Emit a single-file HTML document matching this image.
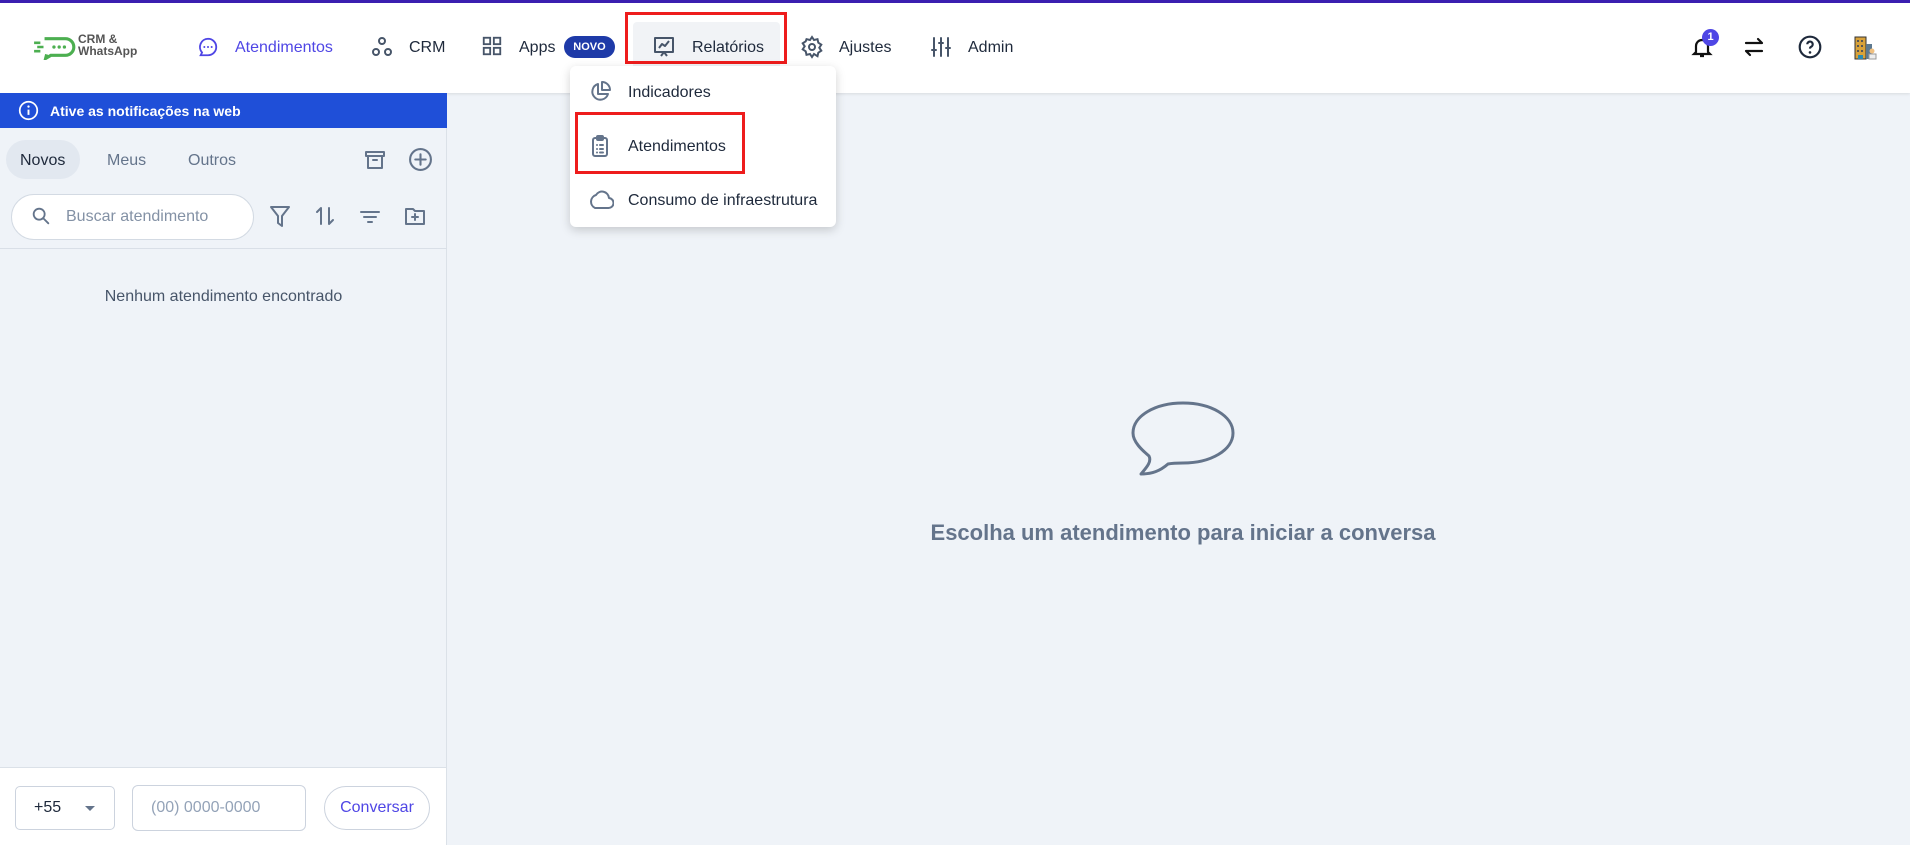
<!DOCTYPE html>
<html><head><meta charset="utf-8"><style>
*{box-sizing:border-box;margin:0;padding:0}
body{width:1910px;height:845px;overflow:hidden;font-family:"Liberation Sans",sans-serif;background:#eff3f8;position:relative;color:#1e293b}
.abs{position:absolute}
.top{left:0;top:0;width:1910px;height:3px;background:#3b1fb0}
.hdr{left:0;top:3px;width:1910px;height:90px;background:#fff;box-shadow:0 1px 3px rgba(0,0,0,.1)}
.nav{font-size:16px;color:#1e293b;top:39px}
svg{display:block}
.left{left:0;top:93px;width:447px;height:752px;background:#eff3f8;border-right:1px solid #dbe1e8}
.banner{left:0;top:93px;width:447px;height:35px;background:#1f4fd8;color:#fff;font-weight:bold;font-size:14px}
.ic{stroke:#64748b;fill:none;stroke-width:2;stroke-linecap:round;stroke-linejoin:round}
.dd{left:570px;top:66px;width:266px;height:161px;background:#fff;border-radius:6px;box-shadow:0 3px 10px rgba(0,0,0,.18)}
.dd div{position:absolute;left:58px;font-size:16px;color:#1e293b}
</style></head><body>
<div class="abs hdr"></div><div class="abs top"></div>
<!-- logo -->
<svg class="abs" style="left:32px;top:34px" width="46" height="26" viewBox="0 0 44 24"><path d="M12 4h20a8 8 0 0 1 0 16H18l-5 3 1-4" fill="none" stroke="#4caf50" stroke-width="3"/><circle cx="21" cy="12" r="1.6" fill="#4caf50"/><circle cx="26" cy="12" r="1.6" fill="#4caf50"/><circle cx="31" cy="12" r="1.6" fill="#4caf50"/><path d="M2 8h6M5 12h6M2 16h6" stroke="#4caf50" stroke-width="2.5"/></svg>
<div class="abs" style="left:78px;top:33px;font-size:12px;font-weight:bold;color:#555;line-height:12px">CRM &amp;<br>WhatsApp</div>
<!-- nav -->
<svg class="abs" style="left:197px;top:36px" width="22" height="22" viewBox="0 0 24 24"><path d="M12 3a9 9 0 0 1 0 18H4l1.5-3A9 9 0 0 1 12 3z" fill="none" stroke="#4f46e5" stroke-width="2"/><circle cx="8" cy="12" r="1.1" fill="#4f46e5"/><circle cx="12" cy="12" r="1.1" fill="#4f46e5"/><circle cx="16" cy="12" r="1.1" fill="#4f46e5"/></svg>
<div class="abs nav" style="left:235px;color:#4f46e5">Atendimentos</div>
<svg class="abs" style="left:370px;top:35px" width="24" height="24" viewBox="0 0 24 24"><g fill="none" stroke="#475569" stroke-width="2"><circle cx="12" cy="6" r="3"/><circle cx="6" cy="17" r="3"/><circle cx="18" cy="17" r="3"/></g></svg>
<div class="abs nav" style="left:409px">CRM</div>
<svg class="abs" style="left:481px;top:35px" width="22" height="22" viewBox="0 0 24 24"><g fill="none" stroke="#475569" stroke-width="2"><rect x="3" y="3" width="7" height="7"/><rect x="14" y="3" width="7" height="7"/><rect x="3" y="14" width="7" height="7"/><rect x="14" y="14" width="7" height="7"/></g></svg>
<div class="abs nav" style="left:519px">Apps</div>
<div class="abs" style="left:564px;top:36px;width:51px;height:22px;border-radius:11px;background:#1e3aa8;color:#fff;font-size:11px;font-weight:bold;text-align:center;line-height:22px">NOVO</div>
<div class="abs" style="left:633px;top:22px;width:147px;height:48px;background:#f1f3f6;border-radius:4px"></div>
<div class="abs" style="left:625px;top:12px;width:162px;height:52px;border:3px solid #ee1c1c"></div>
<svg class="abs" style="left:652px;top:35px" width="24" height="24" viewBox="0 0 24 24"><g fill="none" stroke="#475569" stroke-width="2" stroke-linejoin="round"><rect x="3" y="3" width="18" height="14"/><path d="M7 13l3-4 3 2 4-5M9 21l3-4 3 4"/></g></svg>
<div class="abs nav" style="left:692px">Relatórios</div>
<svg class="abs" style="left:800px;top:35px" width="24" height="24" viewBox="0 0 24 24"><g fill="none" stroke="#475569" stroke-width="2"><circle cx="12" cy="12" r="3"/><path d="M12 2l2 3 3.5-.8.8 3.5 3 2-2 3 2 3-3 2-.8 3.5L14 19l-2 3-2-3-3.5.8L5.7 16.3l-3-2 2-3-2-3 3-2L6.5 4.2 10 5z"/></g></svg>
<div class="abs nav" style="left:839px">Ajustes</div>
<svg class="abs" style="left:929px;top:35px" width="24" height="24" viewBox="0 0 24 24"><g fill="none" stroke="#475569" stroke-width="2" stroke-linecap="round"><path d="M5 3v18M12 3v18M19 3v18"/><path d="M3 15h4M10 8h4M17 13h4"/></g></svg>
<div class="abs nav" style="left:968px">Admin</div>
<!-- right icons -->
<svg class="abs" style="left:1690px;top:35px" width="24" height="24" viewBox="0 0 24 24"><path d="M6 17V11a6 6 0 0 1 12 0v6l2 2H4zM10 21h4" fill="none" stroke="#111" stroke-width="2.2"/></svg>
<div class="abs" style="left:1702px;top:29px;width:17px;height:17px;border-radius:50%;background:#4f46e5;color:#fff;font-size:11px;font-weight:bold;text-align:center;line-height:17px">1</div>
<svg class="abs" style="left:1742px;top:35px" width="24" height="24" viewBox="0 0 24 24"><path d="M4 8h16l-4-4M20 16H4l4 4" fill="none" stroke="#111" stroke-width="2.2" stroke-linecap="round" stroke-linejoin="round"/></svg>
<svg class="abs" style="left:1797px;top:34px" width="26" height="26" viewBox="0 0 24 24"><circle cx="12" cy="12" r="9.5" fill="none" stroke="#1e293b" stroke-width="2"/><path d="M9.5 9.5a2.5 2.5 0 1 1 3.5 2.3c-.7.4-1 .9-1 1.7" fill="none" stroke="#1e293b" stroke-width="2"/><circle cx="12" cy="17" r="1.2" fill="#1e293b"/></svg>
<svg class="abs" style="left:1853px;top:36px" width="24" height="24" viewBox="0 0 24 24"><rect x="2" y="1" width="11" height="22" fill="#d8a23a" stroke="#333"/><g fill="#555"><rect x="4" y="4" width="2" height="2"/><rect x="8" y="4" width="2" height="2"/><rect x="4" y="9" width="2" height="2"/><rect x="8" y="9" width="2" height="2"/><rect x="4" y="14" width="2" height="2"/><rect x="8" y="14" width="2" height="2"/></g><rect x="5" y="19" width="5" height="4" fill="#2b8ab0"/><rect x="13" y="8" width="6" height="15" fill="#5d7990"/><circle cx="19" cy="15" r="2.5" fill="#f0c080"/><rect x="16" y="18" width="7" height="5" fill="#eee" stroke="#999"/></svg>
<!-- left panel -->
<div class="abs left"></div>
<div class="abs banner"><svg class="abs" style="left:18px;top:7px" width="21" height="21" viewBox="0 0 24 24"><circle cx="12" cy="12" r="10" fill="none" stroke="#fff" stroke-width="2"/><path d="M12 11v6" stroke="#fff" stroke-width="2.2"/><circle cx="12" cy="7.5" r="1.3" fill="#fff"/></svg><span class="abs" style="left:50px;top:10px">Ative as notificações na web</span></div>
<div class="abs" style="left:6px;top:140px;width:74px;height:39px;border-radius:20px;background:#e2e8f0"></div>
<div class="abs" style="left:20px;top:152px;font-size:16px;color:#1e293b">Novos</div>
<div class="abs" style="left:107px;top:152px;font-size:16px;color:#64748b">Meus</div>
<div class="abs" style="left:188px;top:152px;font-size:16px;color:#64748b">Outros</div>
<svg class="abs" style="left:363px;top:148px" width="24" height="24" viewBox="0 0 24 24"><g class="ic"><rect x="3" y="4" width="18" height="4"/><path d="M5 8v12h14V8M10 12h4"/></g></svg>
<svg class="abs" style="left:408px;top:147px" width="25" height="25" viewBox="0 0 24 24"><g class="ic"><circle cx="12" cy="12" r="10"/><path d="M12 7v10M7 12h10"/></g></svg>
<div class="abs" style="left:11px;top:194px;width:243px;height:46px;border-radius:23px;background:#fff;border:1px solid #d3dae3"></div>
<svg class="abs" style="left:30px;top:205px" width="22" height="22" viewBox="0 0 24 24"><g class="ic"><circle cx="10" cy="10" r="6"/><path d="M15 15l5 5"/></g></svg>
<div class="abs" style="left:66px;top:208px;font-size:16px;color:#8391a5">Buscar atendimento</div>
<svg class="abs" style="left:268px;top:204px" width="24" height="26" viewBox="0 0 24 26"><path class="ic" d="M3 3h18l-7 9v10l-4-3v-7z"/></svg>
<svg class="abs" style="left:313px;top:204px" width="24" height="24" viewBox="0 0 24 24"><path class="ic" d="M8 20V4L4 8M16 4v16l4-4"/></svg>
<svg class="abs" style="left:358px;top:205px" width="24" height="24" viewBox="0 0 24 24"><path class="ic" d="M3 7h18M6 12h12M10 17h4"/></svg>
<svg class="abs" style="left:403px;top:204px" width="24" height="24" viewBox="0 0 24 24"><path class="ic" d="M3 5h7l2 2h9v13H3zM12 10v6M9 13h6"/></svg>
<div class="abs" style="left:0;top:248px;width:447px;height:1px;background:#d9dfe7"></div>
<div class="abs" style="left:0;top:288px;width:447px;text-align:center;font-size:16px;color:#475569">Nenhum atendimento encontrado</div>
<div class="abs" style="left:0;top:767px;width:447px;height:78px;background:#fff;border-top:1px solid #dbe1e8;border-right:1px solid #dbe1e8"></div>
<div class="abs" style="left:15px;top:786px;width:100px;height:44px;border:1px solid #ccd3de;border-radius:5px;background:#fff"></div>
<div class="abs" style="left:34px;top:799px;font-size:16px;color:#1e293b">+55</div>
<div class="abs" style="left:85px;top:806px;width:0;height:0;border-left:5px solid transparent;border-right:5px solid transparent;border-top:5px solid #64748b"></div>
<div class="abs" style="left:132px;top:785px;width:174px;height:46px;border:1px solid #ccd3de;border-radius:6px;background:#fff"></div>
<div class="abs" style="left:151px;top:799px;font-size:16px;color:#94a3b8">(00) 0000-0000</div>
<div class="abs" style="left:324px;top:786px;width:106px;height:44px;border:1px solid #ccd3de;border-radius:22px;background:#fff;color:#4f46e5;font-size:16px;text-align:center;line-height:42px">Conversar</div>
<!-- center -->
<svg class="abs" style="left:1128px;top:398px" width="110" height="92" viewBox="0 0 110 92"><path d="M55 5c28 0 50 13 50 30s-22 30-50 30c-5 0-10 0-15 1-8 7-16 10-27 10 5-6 11-12 8-18C14 52 5 44 5 35 5 18 27 5 55 5z" fill="none" stroke="#64748b" stroke-width="3" stroke-linejoin="round"/></svg>
<div class="abs" style="left:910px;top:520px;width:546px;text-align:center;font-size:22px;font-weight:bold;color:#64748b">Escolha um atendimento para iniciar a conversa</div>
<!-- dropdown -->
<div class="abs dd">
<svg class="abs" style="left:18px;top:14px" width="24" height="24" viewBox="0 0 24 24"><path class="ic" d="M10 4a8 8 0 1 0 10 10H10zM14 2v8h8a8 8 0 0 0-8-8z"/></svg>
<div style="top:18px">Indicadores</div>
<svg class="abs" style="left:18px;top:68px" width="24" height="24" viewBox="0 0 24 24"><g class="ic"><rect x="5" y="4" width="14" height="18" rx="2"/><rect x="9" y="2" width="6" height="4" rx="1"/><path d="M9 11h.01M12 11h3M9 15h.01M12 15h3M9 18.5h.01M12 18.5h3"/></g></svg>
<div style="top:72px">Atendimentos</div>
<svg class="abs" style="left:18px;top:122px" width="26" height="24" viewBox="0 0 26 24"><path class="ic" d="M7 20h13a5 5 0 0 0 1-10 7 7 0 0 0-13-3A7 7 0 0 0 7 20z"/></svg>
<div style="top:126px">Consumo de infraestrutura</div>
</div>
<div class="abs" style="left:575px;top:112px;width:170px;height:62px;border:3px solid #ee1c1c"></div>
</body></html>
